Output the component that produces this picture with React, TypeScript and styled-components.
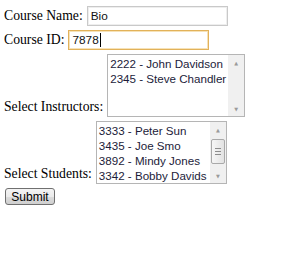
import * as React from "react";
import styled, { createGlobalStyle } from "styled-components";

const instructors = ["2222 - John Davidson", "2345 - Steve Chandler"];
const students = [
  "3333 - Peter Sun",
  "3435 - Joe Smo",
  "3892 - Mindy Jones",
  "3342 - Bobby Davids"
];

const GlobalStyle = createGlobalStyle`
  body {
    margin: 6px 4px 0;
    background: #fff;
    color: #000;
    font-family: "Liberation Serif", "Times New Roman", serif;
    font-size: 13.7px;
  }
`;

const App: React.FC = () => {
  return (
    <>
      <GlobalStyle />
      <Form>
        <Row $align="baseline">
          <Label>Course Name:</Label>
          <Field $width={141}>Bio</Field>
        </Row>
        <Row $align="baseline">
          <Label>Course ID:</Label>
          <Field $width={141} $focused>
            7878
            <Caret />
          </Field>
        </Row>
        <Row $align="flex-end">
          <Label $bottom>Select Instructors:</Label>
          <ListBox $width={138}>
            <Options>
              {instructors.map(i => (
                <Option key={i}>{i}</Option>
              ))}
            </Options>
            <ScrollBar>
              <Arrow>▲</Arrow>
              <Track />
              <Arrow>▼</Arrow>
            </ScrollBar>
          </ListBox>
        </Row>
        <Row $align="flex-end">
          <Label $bottom>Select Students:</Label>
          <ListBox $width={131}>
            <Options>
              {students.map(s => (
                <Option key={s}>{s}</Option>
              ))}
            </Options>
            <ScrollBar>
              <Arrow>▲</Arrow>
              <Track>
                <Thumb>
                  <Grip />
                  <Grip />
                  <Grip />
                </Thumb>
              </Track>
              <Arrow>▼</Arrow>
            </ScrollBar>
          </ListBox>
        </Row>
        <div>
          <Button>Submit</Button>
        </div>
      </Form>
    </>
  );
};

const Form = styled.div`
  display: flex;
  flex-direction: column;
  gap: 4px;
`;

const Row = styled.div<{ $align: string }>`
  display: flex;
  flex-direction: row;
  align-items: ${p => p.$align};
  gap: 4px;
`;

const Label = styled.span<{ $bottom?: boolean }>`
  line-height: 15px;
  padding-bottom: ${p => (p.$bottom ? "3px" : "0")};
  white-space: nowrap;
`;

const Field = styled.div<{ $width: number; $focused?: boolean }>`
  box-sizing: border-box;
  width: ${p => p.$width}px;
  height: 20px;
  display: flex;
  align-items: center;
  padding: 0 3px;
  border: 1px solid ${p => (p.$focused ? "#e2b25a" : "#c9c9c9")};
  box-shadow: inset 0 0 0 1px ${p => (p.$focused ? "#f6e2b8" : "#eeeeee")};
  font-family: "Liberation Sans", Arial, sans-serif;
  font-size: 11.8px;
  color: #111;
`;

const Caret = styled.span`
  display: inline-block;
  width: 1px;
  height: 14px;
  margin-left: 1px;
  background: #000;
`;

const ListBox = styled.div<{ $width: number }>`
  box-sizing: border-box;
  width: ${p => p.$width}px;
  height: 63px;
  display: flex;
  flex-direction: row;
  border: 1px solid #b5b5b5;
  background: #fff;
`;

const Options = styled.div`
  flex: 1;
  padding: 1px 0 0 2px;
  overflow: hidden;
  font-family: "Liberation Sans", Arial, sans-serif;
  font-size: 11.6px;
  color: #1c1c3a;
`;

const Option = styled.div`
  height: 15px;
  line-height: 15px;
  white-space: nowrap;
`;

const ScrollBar = styled.div`
  width: 16px;
  flex-shrink: 0;
  display: flex;
  flex-direction: column;
  background: #f0f0f0;
`;

const Arrow = styled.div`
  height: 15px;
  display: flex;
  align-items: center;
  justify-content: center;
  font-family: "DejaVu Sans", sans-serif;
  font-size: 5px;
  color: #9a9a9a;
`;

const Track = styled.div`
  flex: 1;
  padding: 0 1px;
`;

const Thumb = styled.div`
  box-sizing: border-box;
  height: 25px;
  margin-top: 2px;
  border: 1px solid #a9a9a9;
  border-radius: 2px;
  background: linear-gradient(to right, #f6f6f6, #e2e2e2);
  display: flex;
  flex-direction: column;
  align-items: center;
  justify-content: center;
  gap: 2px;
`;

const Grip = styled.div`
  width: 6px;
  height: 1px;
  background: #8c8c8c;
`;

const Button = styled.button`
  box-sizing: border-box;
  width: 50px;
  height: 17px;
  margin: 0 0 0 1px;
  padding: 0;
  border: 1px solid #707070;
  border-radius: 3px;
  background: linear-gradient(to bottom, #f4f4f4 0%, #ebebeb 50%, #dcdcdc 51%, #cfcfcf 100%);
  font-family: "Liberation Sans", Arial, sans-serif;
  font-size: 12px;
  color: #000;
`;

export default App;
